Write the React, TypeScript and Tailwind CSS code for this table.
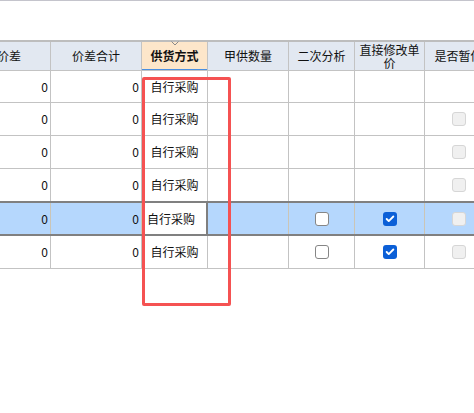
import { Check } from 'lucide-react';

type Box = 'none' | 'off' | 'on' | 'disabled';

type Row = {
  diff: number;
  total: number;
  supply: string;
  second: Box;
  direct: Box;
  estimate: Box;
  selected?: boolean;
};

const rows: Row[] = [
  { diff: 0, total: 0, supply: '自行采购', second: 'none', direct: 'none', estimate: 'none' },
  { diff: 0, total: 0, supply: '自行采购', second: 'none', direct: 'none', estimate: 'disabled' },
  { diff: 0, total: 0, supply: '自行采购', second: 'none', direct: 'none', estimate: 'disabled' },
  { diff: 0, total: 0, supply: '自行采购', second: 'none', direct: 'none', estimate: 'disabled' },
  { diff: 0, total: 0, supply: '自行采购', second: 'off', direct: 'on', estimate: 'disabled', selected: true },
  { diff: 0, total: 0, supply: '自行采购', second: 'off', direct: 'on', estimate: 'disabled' },
];

// column widths include the 1px right rule
const W = ['w-[83px]', 'w-[91px]', 'w-[66px]', 'w-[81px]', 'w-[66px]', 'w-[70px]', 'w-[68px]'];

function CheckBox({ state }: { state: Box }) {
  if (state === 'none') return null;
  if (state === 'on')
    return (
      <span className="flex h-[14px] w-[14px] items-center justify-center rounded-[3px] bg-[#0b5fd7]">
        <Check size={10} strokeWidth={4.5} className="text-white" />
      </span>
    );
  if (state === 'disabled')
    return <span className="block h-[14px] w-[14px] rounded-[3px] border border-[#d6d6d6] bg-[#f0f0f0]" />;
  return <span className="block h-[14px] w-[14px] rounded-[3px] border border-[#868686] bg-white" />;
}

function HeaderRow() {
  const cell = 'flex h-full shrink-0 items-center justify-center border-r border-[#c3c3c3] text-center';
  return (
    <div className="flex h-[31px] border-t-2 border-b border-t-[#bdbdbd] border-b-[#c3c3c3] bg-[#e2e8f1]">
      <div className={`${cell} ${W[0]}`}>价差</div>
      <div className={`${cell} ${W[1]}`}>价差合计</div>
      <div className={`${cell} ${W[2]} relative bg-[#fde6ca] font-bold shadow-[inset_0_-1px_0_#4a8fe0]`}>
        <svg className="absolute left-1/2 top-[-1px] -translate-x-1/2" width="8" height="5" viewBox="0 0 8 5">
          <path d="M0.5 0.5 L4 4 L7.5 0.5" fill="none" stroke="#8a8a8a" strokeWidth="1" />
        </svg>
        供货方式
      </div>
      <div className={`${cell} ${W[3]}`}>甲供数量</div>
      <div className={`${cell} ${W[4]}`}>二次分析</div>
      <div className={`${cell} ${W[5]} px-[4px] leading-[13px]`}>直接修改单价</div>
      <div className={`${cell} ${W[6]}`}>是否暂估</div>
    </div>
  );
}

function DataRow({ row, first }: { row: Row; first: boolean }) {
  const sel = !!row.selected;
  const rule = sel ? 'border-[#cbc5b6]' : 'border-[#c3c3c3]';
  const cell = `flex h-full shrink-0 items-center border-r ${rule}`;
  const height = first ? 'h-[32px]' : sel ? 'h-[35px] -mt-px' : 'h-[33px]';
  return (
    <div
      className={`flex ${height} ${
        sel ? 'relative border-y-2 border-[#808080] bg-[#b5d7fd]' : 'border-b border-[#c3c3c3]'
      }`}
    >
      <div className={`${cell} ${W[0]} justify-end pr-[2px]`}>{row.diff}</div>
      <div className={`${cell} ${W[1]} justify-end pr-[2px]`}>{row.total}</div>
      {sel ? (
        <div className={`flex h-full shrink-0 items-center border-x-2 border-[#7f7f7f] bg-white pl-[3px] ${W[2]}`}>
          {row.supply}
        </div>
      ) : (
        <div className={`${cell} ${W[2]} justify-center`}>{row.supply}</div>
      )}
      <div className={`${cell} ${W[3]}`} />
      <div className={`${cell} ${W[4]} justify-center`}>
        <CheckBox state={row.second} />
      </div>
      <div className={`${cell} ${W[5]} justify-center`}>
        <CheckBox state={row.direct} />
      </div>
      <div className={`${cell} ${W[6]} justify-center`}>
        <CheckBox state={row.estimate} />
      </div>
    </div>
  );
}

export default function App() {
  return (
    <div className="relative h-[413px] w-[474px] overflow-hidden bg-white font-['Noto_Sans_CJK_SC','Liberation_Sans',sans-serif] text-[12px] leading-none text-[#111]">
      {/* toolbar strip above the grid */}
      <div className="h-[40px] border-t border-[#c4c4cc]" />

      <div className="-ml-[32px] w-[525px]">
        <HeaderRow />
        {rows.map((row, i) => (
          <DataRow key={i} row={row} first={i === 0} />
        ))}
      </div>

      {/* annotation box around the supply column */}
      <div className="pointer-events-none absolute left-[142px] top-[77px] h-[229px] w-[89px] rounded-[2px] border-[3px] border-[#f55252]" />
    </div>
  );
}
